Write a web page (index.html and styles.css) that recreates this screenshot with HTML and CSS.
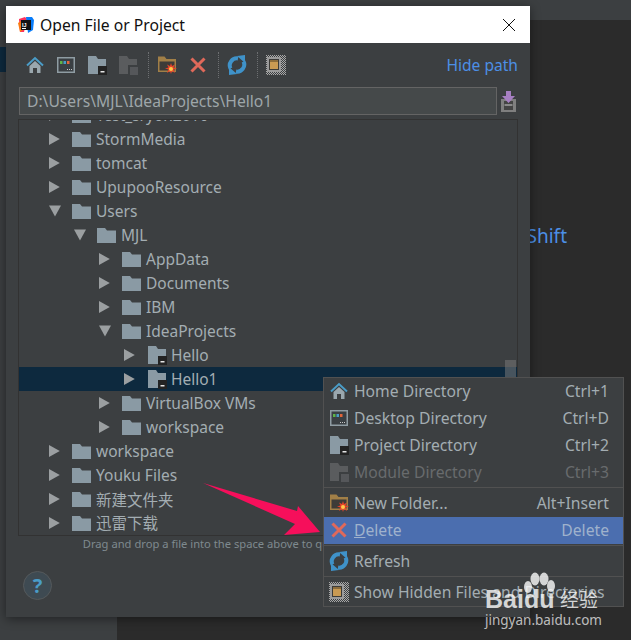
FILE: index.html
```html
<!DOCTYPE html>
<html lang="en">
<head>
<meta charset="utf-8">
<title>Open File or Project</title>
<link rel="stylesheet" href="styles.css">
</head>
<body>
<svg class="sprite" aria-hidden="true">
  <defs>
    <pattern id="checker" width="2" height="2" patternUnits="userSpaceOnUse">
      <rect width="1" height="1" fill="#a8a8a8"/><rect x="1" y="1" width="1" height="1" fill="#a8a8a8"/>
    </pattern>
  </defs>
  <symbol id="i-home" viewBox="0 0 20 20">
    <path d="M2 10.500 10 3l8 7.500" fill="none" stroke="#4a9cc7" stroke-width="2"/>
    <path d="M4.500 11 10 6l5.500 5v7H12v-5H8v5H4.500z" fill="#9aa7ae"/>
  </symbol>
  <symbol id="i-desktop" viewBox="0 0 20 20">
    <rect x="1" y="2" width="18" height="16" fill="#8f9ca3"/>
    <rect x="2.500" y="3.500" width="15" height="13" fill="#3a3f43"/>
    <rect x="4" y="6" width="2.500" height="3" fill="#5fb347"/>
    <rect x="7.500" y="6" width="2.500" height="3" fill="#4a9cc7"/>
    <rect x="11" y="6" width="2.500" height="3" fill="#e2653a"/>
    <path d="M11 14h1v1h-1zM13 14h1v1h-1zM15 14h1v1h-1z" fill="#c8c8c8"/>
  </symbol>
  <symbol id="i-project" viewBox="0 0 20 20">
    <path d="M1 1h8l2 3h8v15H1z" fill="#8a9aa4"/>
    <rect x="11" y="11" width="9" height="9" fill="#232323"/>
    <rect x="13.500" y="16" width="4" height="1.500" fill="#e6e6e6"/>
  </symbol>
  <symbol id="i-module" viewBox="0 0 20 20">
    <path d="M1 1h8l2 3h8v15H1z" fill="#5a5c5e"/>
    <rect x="10" y="10" width="10" height="10" fill="#3c3f41"/>
    <rect x="12" y="12" width="8" height="8" fill="#55575a"/>
  </symbol>
  <symbol id="i-folder" viewBox="0 0 19 15">
    <path d="M0 0h8l2 2.500h9V15H0z" fill="#8a9aa4"/>
  </symbol>
  <symbol id="i-new" viewBox="0 0 20 20">
    <path d="M1 1.500h6.500l2 2.500H19v13H1z" fill="#a17f47"/>
    <path d="M2.500 6.500h15v9h-15z" fill="#3c3b38"/>
    <path d="M14 8l1 3 3-1.500-1.500 3 3.500 1-3.500 1 1.500 3.500-3-2-1 3-1-3-3 2 1.500-3.500-3.500-1 3.500-1-1.500-3 3 1.500z" fill="#e8432a"/>
    <circle cx="14" cy="14" r="2" fill="#ffc94a"/>
  </symbol>
  <symbol id="i-del" viewBox="0 0 20 20">
    <path d="M3.500 3.500l13 13M16.500 3.500l-13 13" stroke="#e0695a" stroke-width="3" fill="none"/>
  </symbol>
  <symbol id="i-refresh" viewBox="0 0 20 20">
    <path d="M3.500 13.500A7 7 0 0 1 11 3.500" fill="none" stroke="#3f92c9" stroke-width="4"/>
    <path d="M16.500 6.500A7 7 0 0 1 9 16.500" fill="none" stroke="#3f92c9" stroke-width="4"/>
    <path d="M10 1l8-1v8zM10 19l-8 1v-8z" fill="#3f92c9"/>
  </symbol>
  <symbol id="i-hidden" viewBox="0 0 20 20">
    <rect x="0" y="0" width="20" height="20" fill="url(#checker)"/>
    <rect x="1" y="2" width="14" height="15" fill="#9a9a9a"/>
    <rect x="3" y="4" width="10" height="11" fill="#3c3b38"/>
    <rect x="4" y="5" width="8" height="9" fill="#c99a52"/>
    <rect x="4" y="5" width="8" height="2" fill="#8c6c3a"/>
  </symbol>
</svg>

<div class="ide">
  <div class="ide-top"></div>
  <div class="ide-main">
    <aside class="ide-side">
      <div class="side-sel"></div>
    </aside>
    <main class="ide-editor"><span class="editor-hint">Search Everywhere Double Shift</span></main>
  </div>
</div>

<section class="dialog">
  <header class="title-bar">
    <svg class="logo" viewBox="0 0 16 16">
      <path d="M1 2 7 0l2 2-3 13-4 0z" fill="#fe315d"/>
      <path d="M8 0h6l2 3-1 10-5 3z" fill="#087cfa"/>
      <path d="M0 6l3-2 2 9-3 2z" fill="#f97a12"/>
      <rect x="3" y="3" width="10" height="10" fill="#141414"/>
      <text x="4" y="9.500" class="logo-text">IJ</text>
      <rect x="4" y="11" width="4" height="1" fill="#fff"/>
    </svg>
    <span class="title-text">Open File or Project</span>
    <svg class="close" viewBox="0 0 12 12"><path d="M0 0l12 12M12 0 0 12" stroke="#111" stroke-width="1" fill="none"/></svg>
  </header>

  <div class="content">
    <div class="toolbar">
      <svg class="tb-icon"><use href="#i-home"/></svg>
      <svg class="tb-icon"><use href="#i-desktop"/></svg>
      <svg class="tb-icon"><use href="#i-project"/></svg>
      <svg class="tb-icon"><use href="#i-module"/></svg>
      <span class="tb-sep"></span>
      <svg class="tb-icon"><use href="#i-new"/></svg>
      <svg class="tb-icon"><use href="#i-del"/></svg>
      <span class="tb-sep"></span>
      <svg class="tb-icon"><use href="#i-refresh"/></svg>
      <span class="tb-sep"></span>
      <svg class="tb-icon"><use href="#i-hidden"/></svg>
      <a class="hide-path">Hide path</a>
    </div>

    <div class="path-row">
      <div class="path-field">D:\Users\MJL\IdeaProjects\Hello1</div>
      <svg class="save" viewBox="0 0 15 21">
        <path d="M0 8h15v13H0z" fill="#7f7f7f"/>
        <path d="M3 10h9v9H3z" fill="#444"/>
        <rect x="3.500" y="13" width="8" height="2" fill="#8a8a8a"/>
        <path d="M5 0h5v5h4l-6.500 7L1 5h4z" fill="#a67fc2"/>
      </svg>
    </div>

    <div class="tree">
      <div class="rows">
        <div class="row d0"><span class="tw right"></span><svg class="fld"><use href="#i-folder"/></svg><span>Test_sryon2016</span></div>
        <div class="row d0"><span class="tw right"></span><svg class="fld"><use href="#i-folder"/></svg><span>StormMedia</span></div>
        <div class="row d0"><span class="tw right"></span><svg class="fld"><use href="#i-folder"/></svg><span>tomcat</span></div>
        <div class="row d0"><span class="tw right"></span><svg class="fld"><use href="#i-folder"/></svg><span>UpupooResource</span></div>
        <div class="row d0"><span class="tw down"></span><svg class="fld"><use href="#i-folder"/></svg><span>Users</span></div>
        <div class="row d1"><span class="tw down"></span><svg class="fld"><use href="#i-folder"/></svg><span>MJL</span></div>
        <div class="row d2"><span class="tw right"></span><svg class="fld"><use href="#i-folder"/></svg><span>AppData</span></div>
        <div class="row d2"><span class="tw right"></span><svg class="fld"><use href="#i-folder"/></svg><span>Documents</span></div>
        <div class="row d2"><span class="tw right"></span><svg class="fld"><use href="#i-folder"/></svg><span>IBM</span></div>
        <div class="row d2"><span class="tw down"></span><svg class="fld"><use href="#i-folder"/></svg><span>IdeaProjects</span></div>
        <div class="row d3"><span class="tw right"></span><svg class="fld proj"><use href="#i-project"/></svg><span>Hello</span></div>
        <div class="row d3 sel"><span class="tw right"></span><svg class="fld proj"><use href="#i-project"/></svg><span>Hello1</span></div>
        <div class="row d2"><span class="tw right"></span><svg class="fld"><use href="#i-folder"/></svg><span>VirtualBox VMs</span></div>
        <div class="row d2"><span class="tw right"></span><svg class="fld"><use href="#i-folder"/></svg><span>workspace</span></div>
        <div class="row d0"><span class="tw right"></span><svg class="fld"><use href="#i-folder"/></svg><span>workspace</span></div>
        <div class="row d0"><span class="tw right"></span><svg class="fld"><use href="#i-folder"/></svg><span>Youku Files</span></div>
        <div class="row d0"><span class="tw right"></span><svg class="fld"><use href="#i-folder"/></svg><span>新建文件夹</span></div>
        <div class="row d0"><span class="tw right"></span><svg class="fld"><use href="#i-folder"/></svg><span class="cjk-row">迅雷下载</span></div>
      </div>
      <div class="scroll-thumb"></div>
    </div>

    <p class="hint">Drag and drop a file into the space above to quickly locate it in the tree</p>
    <button class="help">?</button>
  </div>
</section>

<ul class="menu">
  <li class="item"><svg class="m-icon"><use href="#i-home"/></svg><span class="m-label">Home Directory</span><span class="m-key">Ctrl+1</span></li>
  <li class="item"><svg class="m-icon"><use href="#i-desktop"/></svg><span class="m-label">Desktop Directory</span><span class="m-key">Ctrl+D</span></li>
  <li class="item"><svg class="m-icon"><use href="#i-project"/></svg><span class="m-label">Project Directory</span><span class="m-key">Ctrl+2</span></li>
  <li class="item off"><svg class="m-icon"><use href="#i-module"/></svg><span class="m-label">Module Directory</span><span class="m-key">Ctrl+3</span></li>
  <li class="m-sep first"></li>
  <li class="item"><svg class="m-icon"><use href="#i-new"/></svg><span class="m-label">New Folder...</span><span class="m-key">Alt+Insert</span></li>
  <li class="item active"><svg class="m-icon"><use href="#i-del"/></svg><span class="m-label"><u>D</u>elete</span><span class="m-key">Delete</span></li>
  <li class="m-sep second"></li>
  <li class="item tall"><svg class="m-icon"><use href="#i-refresh"/></svg><span class="m-label">Refresh</span></li>
  <li class="m-sep"></li>
  <li class="item tall"><svg class="m-icon"><use href="#i-hidden"/></svg><span class="m-label">Show Hidden Files and Directories</span></li>
</ul>

<svg class="arrow" viewBox="0 0 120 54">
  <path d="M0 0 94 28 95 23 117 49 81 52 92 41z" fill="#f60f5b"/>
</svg>

<div class="mark">
  <svg class="paw" viewBox="0 0 34 28">
    <ellipse cx="6" cy="15" rx="4" ry="6"/><ellipse cx="13" cy="7" rx="4.500" ry="6.500"/>
    <ellipse cx="22" cy="7" rx="4.500" ry="6.500"/><ellipse cx="29" cy="14" rx="4" ry="6"/>
  </svg>
  <div class="mark-line"><b>Baidu</b><span class="mark-cn">经验</span></div>
  <div class="mark-url">jingyan.baidu.com</div>
</div>
</body>
</html>
```
FILE: styles.css
```css
* { box-sizing: border-box; }
html, body { margin: 0; padding: 0; height: 100%; }
body {
  width: 631px;
  height: 640px;
  overflow: hidden;
  position: relative;
  background: #2b2b2b;
  font-family: "Noto Sans", "Noto Sans CJK SC", sans-serif;
}
.sprite { position: absolute; width: 0; height: 0; }

/* IDE behind the dialog */
.ide { display: flex; flex-direction: column; height: 640px; }
.ide-top { height: 20px; background: #3c3f41; }
.ide-main { flex: 1; display: flex; }
.ide-side { width: 117px; background: #3c3f41; padding-top: 27px; }
.side-sel { height: 25px; width: 10px; background: #0d293e; }
.ide-editor { flex: 1; background: #2b2b2b; padding: 203px 64px 0 0; text-align: right; }
.editor-hint { color: #4c8fe6; font-size: 19px; line-height: 26px; white-space: nowrap; }

/* Dialog window */
.dialog {
  position: absolute;
  left: 6px;
  top: 6px;
  width: 524px;
  height: 611px;
  background: #3c3f41;
  box-shadow: 0 2px 10px rgba(0, 0, 0, .45);
  display: flex;
  flex-direction: column;
}
.title-bar {
  height: 37px;
  flex: none;
  background: #fff;
  display: flex;
  align-items: center;
  padding: 0 15px 0 12px;
}
.logo { width: 16px; height: 16px; margin-right: 6px; }
.logo-text { font: bold 5.500px "Liberation Sans", sans-serif; fill: #fff; }
.title-text { font-size: 15.700px; line-height: 34px; color: #111; flex: 1; }
.close { width: 12px; height: 12px; }

.content { position: relative; flex: 1; padding: 0 12px; display: flex; flex-direction: column; }

.toolbar { height: 44px; display: flex; align-items: center; padding-left: 7px; flex: none; }
.tb-icon { width: 20px; height: 20px; margin-right: 11px; flex: none; }
.tb-sep { width: 0; height: 26px; border-left: 1px dotted #6d6f71; margin: 0 8px 0 -1px; flex: none; }
.hide-path { margin-left: auto; color: #4c8fe6; font-size: 15.600px; }

.path-row { display: flex; align-items: center; margin-left: 1px; flex: none; }
.path-field {
  width: 478px;
  height: 28px;
  background: #45494a;
  border: 1px solid #646464;
  color: #9ea6a9;
  font-size: 15.650px;
  line-height: 26px;
  padding-left: 7px;
  white-space: nowrap;
}
.save { width: 15px; height: 21px; margin-left: 4px; }

.tree {
  position: relative;
  margin-top: 4px;
  height: 417px;
  width: 500px;
  border: 1px solid #323232;
  overflow: hidden;
  flex: none;
}
.rows { margin-top: -17px; }
.row {
  height: 24px;
  display: flex;
  align-items: center;
  color: #a3adb2;
  font-size: 15.500px;
  white-space: nowrap;
}
.row.sel { background: #0d293e; }
.d0 { padding-left: 30px; }
.d1 { padding-left: 55px; }
.d2 { padding-left: 80px; }
.d3 { padding-left: 105px; }
.tw { width: 12px; height: 12px; flex: none; margin-right: 11px; background: #9b9fa1; }
.tw.right { clip-path: polygon(0 0, 90% 50%, 0 100%); }
.tw.down { clip-path: polygon(0 5%, 100% 5%, 50% 95%); }
.fld { width: 19px; height: 15px; margin-right: 5px; flex: none; }
.fld.proj { width: 20px; height: 20px; margin-right: 4px; }
.cjk-row { line-height: 22px; }
.scroll-thumb {
  position: absolute;
  right: 1px;
  top: 240px;
  width: 11px;
  height: 60px;
  background: rgba(120, 120, 120, .55);
}

.hint {
  margin: 0;
  text-align: center;
  font-size: 11.200px;
  line-height: 16px;
  color: #7f8a8f;
  white-space: nowrap;
}
.help {
  position: absolute;
  left: 17px;
  top: 528px;
  width: 29px;
  height: 29px;
  border-radius: 50%;
  border: 1px solid #55595b;
  background: #3e4a52;
  color: #4a9cc7;
  font: bold 20px/26px "Noto Sans", sans-serif;
  padding: 0;
}

/* Popup menu */
.menu {
  position: absolute;
  left: 323px;
  top: 377px;
  width: 301px;
  height: 230px;
  margin: 0;
  padding: 0;
  list-style: none;
  background: #3c3f41;
  border: 1px solid #515151;
  color: #a3adb2;
  font-size: 15.700px;
}
.item { height: 27px; display: flex; align-items: center; padding: 0 14px 2px 5px; white-space: nowrap; }
.item.tall { height: 30px; padding-bottom: 0; }
.item.off { color: #686b6d; }
.item.active { background: #4b6eaf; color: #9fb2cc; }
.m-icon { width: 20px; height: 20px; margin-right: 5px; flex: none; }
.m-label { flex: 1; }
.m-sep { height: 1px; background: #515151; }
.m-sep.first { margin: 1px 0 2px; }
.m-sep.second { margin-top: 1px; }

/* Annotation */
.arrow { position: absolute; left: 203px; top: 483px; width: 120px; height: 54px; }

/* Watermark */
.mark {
  position: absolute;
  left: 485px;
  top: 572px;
  width: 113px;
  color: rgba(255, 255, 255, .78);
}
.paw { position: absolute; left: 37px; top: 0; width: 34px; height: 28px; fill: rgba(255, 255, 255, .78); }
.mark-line { display: flex; align-items: center; justify-content: space-between; margin-top: 15px; height: 24px; }
.mark-line b { font: bold 25px/24px "Liberation Sans", sans-serif; }
.mark-cn { font-size: 19px; line-height: 24px; font-family: "Noto Sans CJK SC", sans-serif; }
.mark-url { font-size: 13.500px; line-height: 18px; white-space: nowrap; color: rgba(255, 255, 255, .7); }
```
